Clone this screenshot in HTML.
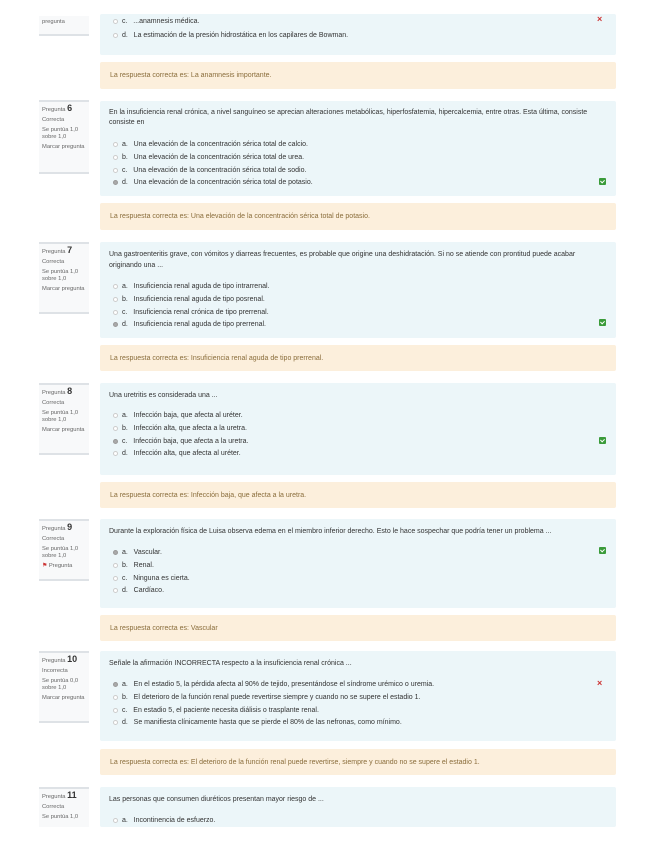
<!DOCTYPE html>
<html><head><meta charset="utf-8"><style>
*{margin:0;padding:0;box-sizing:border-box}
body{width:655px;height:848px;background:#fff;font-family:"Liberation Sans",sans-serif;position:relative;overflow:hidden;color:#444}
.a{position:absolute}
.info{position:absolute;left:39px;width:50px;background:#f8f9fa;border-top:2px solid #dee2e6;border-bottom:2px solid #dee2e6;font-size:5.8px;color:#666;padding:3px 3px;line-height:7px}
.info b{font-size:9px;color:#333}
.info p{margin-bottom:3px}
.q{position:absolute;left:100px;width:516px;background:#ecf6f9;border-radius:2px}
.fb{position:absolute;left:100px;width:516px;background:#fcefdc;border-radius:2px;font-size:7px;color:#8a6d3b;padding:0 10px;display:flex;align-items:center}
.t{position:absolute;font-size:7px;color:#333;white-space:nowrap}
.r{position:absolute;width:5px;height:5px;border:1px solid #ccc;border-radius:50%;background:#fff}
.r.s{background:#aaa;border-color:#999}
.ok{position:absolute;width:7px;height:7px;background:#3a9b3a;border-radius:1px}
.ok:after{content:"";position:absolute;left:2px;top:1px;width:2px;height:3px;border:solid #fff;border-width:0 1px 1px 0;transform:rotate(45deg)}
.x{position:absolute;color:#c33;font-size:9px;font-weight:bold}
</style></head><body>

<div class="info" style="top:16px;height:20px;border-top:none"><p>pregunta</p></div>
<div class="q" style="top:14px;height:41px"></div>
<div class="r" style="left:113px;top:19px"></div><div class="t" style="left:122px;top:18px">c.&nbsp;&nbsp; ...anamnesis médica.</div>
<div class="x" style="left:597px;top:14px">×</div>
<div class="r" style="left:113px;top:33px"></div><div class="t" style="left:122px;top:32px">d.&nbsp;&nbsp; La estimación de la presión hidrostática en los capilares de Bowman.</div>
<div class="fb" style="top:62px;height:27px">La respuesta correcta es: La anamnesis importante.</div>

<div class="info" style="top:100px;height:74px"><p>Pregunta <b>6</b></p><p>Correcta</p><p>Se puntúa 1,0 sobre 1,0</p><p>Marcar pregunta</p></div>
<div class="q" style="top:101px;height:95px"></div>
<div class="t" style="left:109px;top:109px">En la insuficiencia renal crónica, a nivel sanguíneo se aprecian alteraciones metabólicas, hiperfosfatemia, hipercalcemia, entre otras. Esta última, consiste</div>
<div class="t" style="left:109px;top:119px">consiste en</div>
<div class="r" style="left:113px;top:142px"></div><div class="t" style="left:122px;top:141px">a.&nbsp;&nbsp; Una elevación de la concentración sérica total de calcio.</div>
<div class="r" style="left:113px;top:155px"></div><div class="t" style="left:122px;top:154px">b.&nbsp;&nbsp; Una elevación de la concentración sérica total de urea.</div>
<div class="r" style="left:113px;top:168px"></div><div class="t" style="left:122px;top:167px">c.&nbsp;&nbsp; Una elevación de la concentración sérica total de sodio.</div>
<div class="r s" style="left:113px;top:180px"></div><div class="t" style="left:122px;top:179px">d.&nbsp;&nbsp; Una elevación de la concentración sérica total de potasio.</div>
<div class="ok" style="left:599px;top:178px"></div>
<div class="fb" style="top:203px;height:27px">La respuesta correcta es: Una elevación de la concentración sérica total de potasio.</div>

<div class="info" style="top:242px;height:72px"><p>Pregunta <b>7</b></p><p>Correcta</p><p>Se puntúa 1,0 sobre 1,0</p><p>Marcar pregunta</p></div>
<div class="q" style="top:242px;height:96px"></div>
<div class="t" style="left:109px;top:251px">Una gastroenteritis grave, con vómitos y diarreas frecuentes, es probable que origine una deshidratación. Si no se atiende con prontitud puede acabar</div>
<div class="t" style="left:109px;top:262px">originando una ...</div>
<div class="r" style="left:113px;top:284px"></div><div class="t" style="left:122px;top:283px">a.&nbsp;&nbsp; Insuficiencia renal aguda de tipo intrarrenal.</div>
<div class="r" style="left:113px;top:297px"></div><div class="t" style="left:122px;top:296px">b.&nbsp;&nbsp; Insuficiencia renal aguda de tipo posrenal.</div>
<div class="r" style="left:113px;top:310px"></div><div class="t" style="left:122px;top:309px">c.&nbsp;&nbsp; Insuficiencia renal crónica de tipo prerrenal.</div>
<div class="r s" style="left:113px;top:322px"></div><div class="t" style="left:122px;top:321px">d.&nbsp;&nbsp; Insuficiencia renal aguda de tipo prerrenal.</div>
<div class="ok" style="left:599px;top:319px"></div>
<div class="fb" style="top:345px;height:26px">La respuesta correcta es: Insuficiencia renal aguda de tipo prerrenal.</div>

<div class="info" style="top:383px;height:72px"><p>Pregunta <b>8</b></p><p>Correcta</p><p>Se puntúa 1,0 sobre 1,0</p><p>Marcar pregunta</p></div>
<div class="q" style="top:383px;height:92px"></div>
<div class="t" style="left:109px;top:392px">Una uretritis es considerada una ...</div>
<div class="r" style="left:113px;top:413px"></div><div class="t" style="left:122px;top:412px">a.&nbsp;&nbsp; Infección baja, que afecta al uréter.</div>
<div class="r" style="left:113px;top:426px"></div><div class="t" style="left:122px;top:425px">b.&nbsp;&nbsp; Infección alta, que afecta a la uretra.</div>
<div class="r s" style="left:113px;top:439px"></div><div class="t" style="left:122px;top:438px">c.&nbsp;&nbsp; Infección baja, que afecta a la uretra.</div>
<div class="r" style="left:113px;top:451px"></div><div class="t" style="left:122px;top:450px">d.&nbsp;&nbsp; Infección alta, que afecta al uréter.</div>
<div class="ok" style="left:599px;top:437px"></div>
<div class="fb" style="top:482px;height:26px">La respuesta correcta es: Infección baja, que afecta a la uretra.</div>

<div class="info" style="top:519px;height:62px"><p>Pregunta <b>9</b></p><p>Correcta</p><p>Se puntúa 1,0 sobre 1,0</p><p><span style="color:#c33">⚑</span> Pregunta</p></div>
<div class="q" style="top:519px;height:89px"></div>
<div class="t" style="left:109px;top:528px">Durante la exploración física de Luisa observa edema en el miembro inferior derecho. Esto le hace sospechar que podría tener un problema ...</div>
<div class="r s" style="left:113px;top:550px"></div><div class="t" style="left:122px;top:549px">a.&nbsp;&nbsp; Vascular.</div>
<div class="r" style="left:113px;top:563px"></div><div class="t" style="left:122px;top:562px">b.&nbsp;&nbsp; Renal.</div>
<div class="r" style="left:113px;top:576px"></div><div class="t" style="left:122px;top:575px">c.&nbsp;&nbsp; Ninguna es cierta.</div>
<div class="r" style="left:113px;top:588px"></div><div class="t" style="left:122px;top:587px">d.&nbsp;&nbsp; Cardíaco.</div>
<div class="ok" style="left:599px;top:547px"></div>
<div class="fb" style="top:615px;height:26px">La respuesta correcta es: Vascular</div>

<div class="info" style="top:651px;height:72px"><p>Pregunta <b>10</b></p><p>Incorrecta</p><p>Se puntúa 0,0 sobre 1,0</p><p>Marcar pregunta</p></div>
<div class="q" style="top:651px;height:90px"></div>
<div class="t" style="left:109px;top:660px">Señale la afirmación INCORRECTA respecto a la insuficiencia renal crónica ...</div>
<div class="r s" style="left:113px;top:682px"></div><div class="t" style="left:122px;top:681px">a.&nbsp;&nbsp; En el estadio 5, la pérdida afecta al 90% de tejido, presentándose el síndrome urémico o uremia.</div>
<div class="x" style="left:597px;top:678px">×</div>
<div class="r" style="left:113px;top:695px"></div><div class="t" style="left:122px;top:694px">b.&nbsp;&nbsp; El deterioro de la función renal puede revertirse siempre y cuando no se supere el estadio 1.</div>
<div class="r" style="left:113px;top:708px"></div><div class="t" style="left:122px;top:707px">c.&nbsp;&nbsp; En estadio 5, el paciente necesita diálisis o trasplante renal.</div>
<div class="r" style="left:113px;top:720px"></div><div class="t" style="left:122px;top:719px">d.&nbsp;&nbsp; Se manifiesta clínicamente hasta que se pierde el 80% de las nefronas, como mínimo.</div>
<div class="fb" style="top:749px;height:26px">La respuesta correcta es: El deterioro de la función renal puede revertirse, siempre y cuando no se supere el estadio 1.</div>

<div class="info" style="top:787px;height:40px;border-bottom:none"><p>Pregunta <b>11</b></p><p>Correcta</p><p>Se puntúa 1,0</p></div>
<div class="q" style="top:787px;height:40px"></div>
<div class="t" style="left:109px;top:796px">Las personas que consumen diuréticos presentan mayor riesgo de ...</div>
<div class="r" style="left:113px;top:818px"></div><div class="t" style="left:122px;top:817px">a.&nbsp;&nbsp; Incontinencia de esfuerzo.</div>

</body></html>
